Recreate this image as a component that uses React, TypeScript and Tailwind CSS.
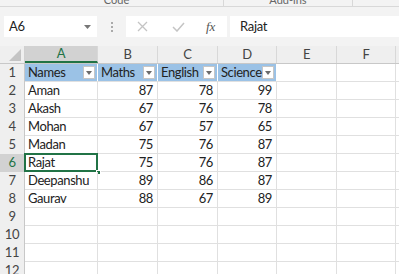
import React from 'react';

const cols = [
    { key: 'A', w: 'w-[73px]' },
    { key: 'B', w: 'w-[60px]' },
    { key: 'C', w: 'w-[60px]' },
    { key: 'D', w: 'w-[59px]' },
    { key: 'E', w: 'w-[60px]' },
    { key: 'F', w: 'w-[59px]' },
];

const headers = ['Names', 'Maths', 'English', 'Science'];

const data = [
    ['Aman', 87, 78, 99],
    ['Akash', 67, 76, 78],
    ['Mohan', 67, 57, 65],
    ['Madan', 75, 76, 87],
    ['Rajat', 75, 76, 87],
    ['Deepanshu', 89, 86, 87],
    ['Gaurav', 88, 67, 89],
];

const FilterButton = () => (
    <span className="absolute right-[2px] top-[2px] w-[12px] h-[13px] bg-white border border-[#c6c6c6] flex items-center justify-center">
        <svg width="6" height="4" viewBox="0 0 6 4">
            <path d="M0 0 L6 0 L3 4 Z" fill="#6b6b6b" />
        </svg>
    </span>
);

const App = () => {
    const rows = Array.from({ length: 12 }, (_, i) => i + 1);

    return (
        <div className="w-[399px] h-[274px] overflow-hidden bg-[#f3f3f3] text-[#222]" style={{ fontFamily: 'Lato, "Open Sans", sans-serif' }}>
            {/* ribbon group labels (cut off) */}
            <div className="h-[7px] overflow-hidden border-b border-[#d8d8d8] flex text-[11px] text-[#666]">
                <div className="w-[224px] border-r border-[#d8d8d8] flex justify-center">
                    <span className="-mt-[8px] ml-[10px]">Code</span>
                </div>
                <div className="w-[129px] border-r border-[#d8d8d8] flex justify-center">
                    <span className="-mt-[8px]">Add-ins</span>
                </div>
            </div>

            {/* formula bar */}
            <div className="h-[39px] flex items-start pt-[9px]">
                <div className="ml-[4px] w-[93px] h-[21px] bg-white flex items-center justify-between pl-[5px] pr-[6px] text-[13px] tracking-[-0.3px]">
                    <span>A6</span>
                    <svg width="7" height="4" viewBox="0 0 7 4">
                        <path d="M0 0 L7 0 L3.5 4 Z" fill="#777" />
                    </svg>
                </div>
                <div className="w-[29px] h-[21px] flex flex-col items-center justify-center gap-[2px]">
                    <span className="w-[2px] h-[2px] bg-[#aaa]" />
                    <span className="w-[2px] h-[2px] bg-[#aaa]" />
                    <span className="w-[2px] h-[2px] bg-[#aaa]" />
                </div>
                <div className="w-[101px] h-[21px] bg-white flex items-center">
                    <svg className="ml-[11px]" width="11" height="11" viewBox="0 0 11 11">
                        <path d="M1 1 L10 10 M10 1 L1 10" stroke="#c4c4c4" strokeWidth="1.3" />
                    </svg>
                    <svg className="ml-[24px]" width="13" height="10" viewBox="0 0 13 10">
                        <path d="M1 5 L5 9 L12 1" stroke="#c4c4c4" strokeWidth="1.5" fill="none" />
                    </svg>
                    <span className="ml-[21px] italic text-[13px] text-[#555]" style={{ fontFamily: '"Liberation Serif", serif' }}>fx</span>
                </div>
                <div className="ml-[3px] flex-1 h-[21px] bg-white flex items-center pl-[10px] text-[13px] tracking-[-0.3px]">
                    Rajat
                </div>
            </div>

            {/* sheet */}
            <div className="bg-white text-[13px] tracking-[-0.4px]">
                {/* column headers */}
                <div className="flex h-[18px] bg-[#efefef] border-b border-[#c8c8c8]">
                    <div className="w-[25px] shrink-0 relative border-r border-[#d0d0d0]">
                        <svg className="absolute right-[3px] bottom-[2px]" width="12" height="12" viewBox="0 0 12 12">
                            <path d="M12 0 L12 12 L0 12 Z" fill="#c4c4c4" />
                        </svg>
                    </div>
                    {cols.map((c) => (
                        <div
                            key={c.key}
                            className={`${c.w} shrink-0 flex items-center justify-center border-r border-[#d8d8d8] ${c.key === 'A' ? 'bg-[#d2d2d2] text-[#217346] border-b-2 border-b-[#217346]' : 'text-[#444]'}`}
                        >
                            {c.key}
                        </div>
                    ))}
                    <div className="flex-1" />
                </div>

                {rows.map((r) => {
                    const isHeader = r === 1;
                    const rec = r >= 2 && r <= 8 ? data[r - 2] : null;
                    const selected = r === 6;
                    return (
                        <div key={r} className="flex h-[18px] border-b border-[#e0e0e0]">
                            <div className={`w-[25px] shrink-0 flex items-center justify-center border-r border-[#c8c8c8] -mb-px ${selected ? 'bg-[#d2d2d2] text-[#217346]' : 'bg-[#efefef] text-[#444]'}`}>
                                {r}
                            </div>
                            {cols.map((c, ci) => {
                                const blue = isHeader && ci < 4;
                                let content: React.ReactNode = null;
                                if (isHeader && ci < 4) {
                                    content = (
                                        <>
                                            <span className="pl-[3px]">{headers[ci]}</span>
                                            <FilterButton />
                                        </>
                                    );
                                } else if (rec && ci < 4) {
                                    content = ci === 0
                                        ? <span className="pl-[3px]">{rec[0]}</span>
                                        : <span className="ml-auto pr-[4px]">{rec[ci]}</span>;
                                }
                                return (
                                    <div
                                        key={c.key}
                                        className={`${c.w} shrink-0 relative flex items-center whitespace-nowrap border-r ${blue ? 'bg-[#9bc2e6] border-white' : 'border-[#e0e0e0]'}`}
                                    >
                                        {content}
                                        {selected && ci === 0 && (
                                            <>
                                                <span className="absolute -left-px -top-px -right-px -bottom-px border-2 border-[#217346]" />
                                                <span className="absolute -right-[4px] -bottom-[4px] w-[5px] h-[5px] bg-[#217346] border border-white" />
                                            </>
                                        )}
                                    </div>
                                );
                            })}
                            <div className="flex-1" />
                        </div>
                    );
                })}
            </div>
        </div>
    );
};

export default App;
